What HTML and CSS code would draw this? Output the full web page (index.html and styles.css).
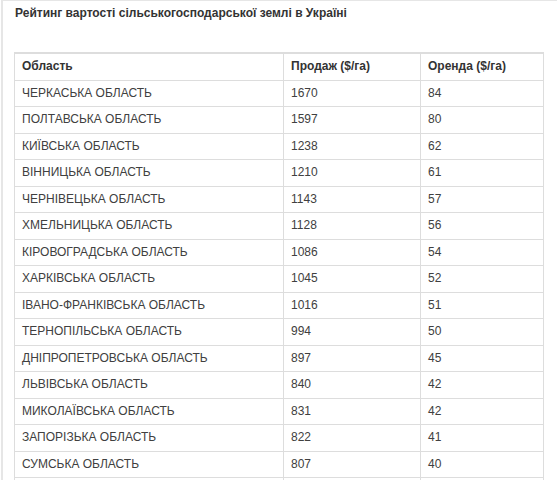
FILE: index.html
```html
<!DOCTYPE html>
<html lang="uk">
<head>
<meta charset="utf-8">
<title>Рейтинг вартості сільськогосподарської землі в Україні</title>
<link rel="stylesheet" href="styles.css">
</head>
<body>
<div class="panel">
  <h3 class="title">Рейтинг вартості сільськогосподарської землі в Україні</h3>
  <table class="rating">
    <colgroup><col class="c1"><col class="c2"><col class="c3"></colgroup>
    <thead>
      <tr><th>Область</th><th>Продаж ($/га)</th><th>Оренда ($/га)</th></tr>
    </thead>
    <tbody>
      <tr><td>ЧЕРКАСЬКА ОБЛАСТЬ</td><td>1670</td><td>84</td></tr>
      <tr><td>ПОЛТАВСЬКА ОБЛАСТЬ</td><td>1597</td><td>80</td></tr>
      <tr><td>КИЇВСЬКА ОБЛАСТЬ</td><td>1238</td><td>62</td></tr>
      <tr><td>ВІННИЦЬКА ОБЛАСТЬ</td><td>1210</td><td>61</td></tr>
      <tr><td>ЧЕРНІВЕЦЬКА ОБЛАСТЬ</td><td>1143</td><td>57</td></tr>
      <tr><td>ХМЕЛЬНИЦЬКА ОБЛАСТЬ</td><td>1128</td><td>56</td></tr>
      <tr><td>КІРОВОГРАДСЬКА ОБЛАСТЬ</td><td>1086</td><td>54</td></tr>
      <tr><td>ХАРКІВСЬКА ОБЛАСТЬ</td><td>1045</td><td>52</td></tr>
      <tr><td>ІВАНО-ФРАНКІВСЬКА ОБЛАСТЬ</td><td>1016</td><td>51</td></tr>
      <tr><td>ТЕРНОПІЛЬСЬКА ОБЛАСТЬ</td><td>994</td><td>50</td></tr>
      <tr><td>ДНІПРОПЕТРОВСЬКА ОБЛАСТЬ</td><td>897</td><td>45</td></tr>
      <tr><td>ЛЬВІВСЬКА ОБЛАСТЬ</td><td>840</td><td>42</td></tr>
      <tr><td>МИКОЛАЇВСЬКА ОБЛАСТЬ</td><td>831</td><td>42</td></tr>
      <tr><td>ЗАПОРІЗЬКА ОБЛАСТЬ</td><td>822</td><td>41</td></tr>
      <tr><td>СУМСЬКА ОБЛАСТЬ</td><td>807</td><td>40</td></tr>
      <tr><td>&nbsp;</td><td>&nbsp;</td><td>&nbsp;</td></tr>
      <tr><td>&nbsp;</td><td>&nbsp;</td><td>&nbsp;</td></tr>
    </tbody>
  </table>
</div>
</body>
</html>
```

FILE: styles.css
```css
html, body {
  margin: 0;
  padding: 0;
  background: #fff;
}
body {
  font-family: "Liberation Sans", Arial, sans-serif;
  font-size: 12px;
  color: #333;
  overflow: hidden;
  height: 480px;
}
.panel {
  margin-left: 1px;
  width: 551px;
  border-left: 2px solid #e6e6e6;
  border-right: 2px solid #e6e6e6;
  border-top: 1px solid #e6e6e6;
  padding: 4px 11px 0 11px;
  min-height: 600px;
}
.title {
  margin: 0 0 30px 1px;
  font-size: 12px;
  line-height: 17px;
  font-weight: bold;
  color: #333;
}
.rating {
  border-collapse: collapse;
  table-layout: fixed;
  width: 529px;
  border-top: 2px solid #dddddd;
}
.rating .c1 { width: 269px; }
.rating .c2 { width: 137px; }
.rating .c3 { width: 123px; }
.rating th,
.rating td {
  border: 1px solid #dddddd;
  padding: 4px 7px;
  line-height: 17.5px;
  text-align: left;
  vertical-align: top;
  color: #333;
  white-space: nowrap;
  overflow: hidden;
}
.rating th {
  font-weight: bold;
  border-top: 2px solid #dddddd;
}
.rating td { color: #404040; }
```
